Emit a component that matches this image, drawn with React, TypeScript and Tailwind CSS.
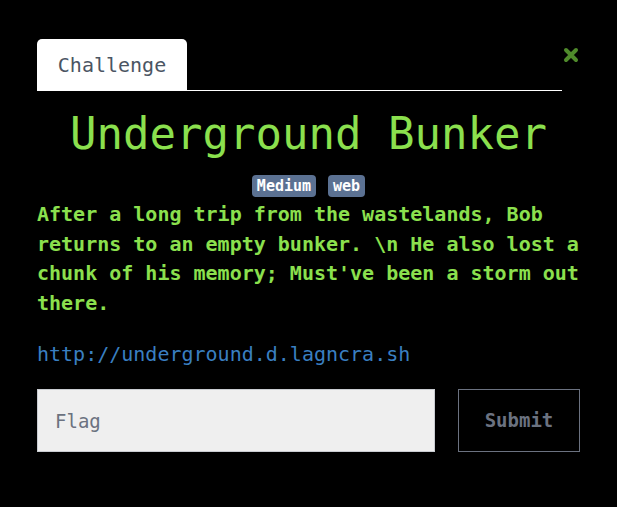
import { useState } from 'react';

const mono = { fontFamily: '"DejaVu Sans Mono", "Liberation Mono", monospace' };

const Badge = ({ label }: { label: string }) => (
  <span className="inline-flex h-[22px] items-center rounded-[4px] bg-[#5b7192] px-[5px] text-[15px] font-bold leading-none text-white">
    {label}
  </span>
);

export default function App() {
  const [flag, setFlag] = useState('');

  return (
    <div className="h-[507px] w-[617px] bg-black px-[37px] pt-[39px]" style={mono}>
      <div className="flex items-start">
        <div className="flex-1 border-b border-white">
          <div className="flex h-[51px] w-[150px] items-center justify-center rounded-t-[5px] bg-white text-[20px] text-[#4b5563]">
            Challenge
          </div>
        </div>
        <button className="mt-[7px] flex h-[18px] w-[18px] items-center justify-center">
          <svg width="16" height="16" viewBox="0 0 16 16">
            <path d="M3 3 L13 13 M13 3 L3 13" stroke="#4f8a2b" strokeWidth="4" strokeLinecap="round" />
          </svg>
        </button>
      </div>

      <h1 className="mt-[16px] text-center text-[44px] leading-[53px] text-[#8be04e]">Underground Bunker</h1>

      <div className="mt-[15px] flex justify-center gap-[12px]">
        <Badge label="Medium" />
        <Badge label="web" />
      </div>

      <p className="mt-[3px] text-[20px] font-bold leading-[29.5px] text-[#8be04e]">
        After a long trip from the wastelands, Bob returns to an empty bunker. \n He also lost a chunk of his memory; Must've been a storm out there.
      </p>

      <a className="mt-[21px] block text-[20px] leading-[30px] text-[#3a7fc1]">http://underground.d.lagncra.sh</a>

      <div className="mt-[20px] flex gap-[23px]">
        <input
          value={flag}
          onChange={(e) => setFlag(e.target.value)}
          placeholder="Flag"
          className="h-[63px] w-[398px] border border-[#c9ccd1] bg-[#efefef] px-[17px] text-[19px] text-[#374151] outline-none placeholder:text-[#6b7280]"
          style={mono}
        />
        <button className="h-[63px] w-[122px] border border-[#6b7280] text-[19px] font-bold text-[#6b7280]" style={mono}>
          Submit
        </button>
      </div>
    </div>
  );
}
